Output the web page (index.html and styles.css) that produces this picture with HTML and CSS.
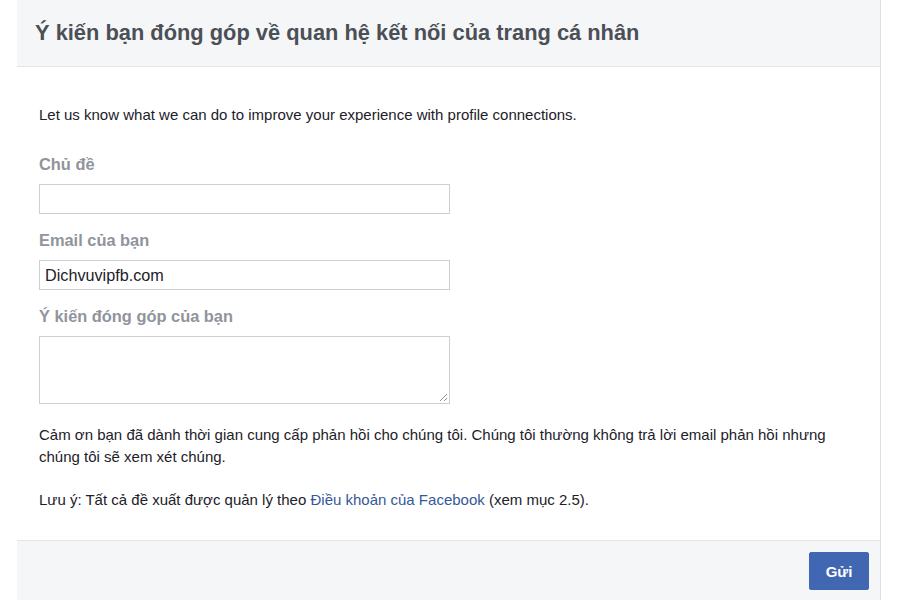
FILE: index.html
```html
<!DOCTYPE html>
<html lang="vi">
<head>
<meta charset="utf-8">
<title>Ý kiến đóng góp</title>
<link rel="stylesheet" href="styles.css">
</head>
<body>
<div class="panel">
  <div class="header">
    <h1 class="title">Ý kiến bạn đóng góp về quan hệ kết nối của trang cá nhân</h1>
  </div>
  <div class="content">
    <p class="intro">Let us know what we can do to improve your experience with profile connections.</p>
    <label class="label label-first">Chủ đề</label>
    <div class="input"></div>
    <label class="label">Email của bạn</label>
    <div class="input">Dichvuvipfb.com</div>
    <label class="label">Ý kiến đóng góp của bạn</label>
    <div class="textarea">
      <svg class="grip" width="10" height="10" viewBox="0 0 10 10"><path d="M9 2 L2 9 M9 6 L6 9" stroke="#8d8f93" stroke-width="1" fill="none"/></svg>
    </div>
    <p class="thanks">Cảm ơn bạn đã dành thời gian cung cấp phản hồi cho chúng tôi. Chúng tôi thường không trả lời email phản hồi nhưng chúng tôi sẽ xem xét chúng.</p>
    <p class="note">Lưu ý: Tất cả đề xuất được quản lý theo <a class="link" href="#">Điều khoản của Facebook</a> (xem mục 2.5).</p>
  </div>
  <div class="footer">
    <button class="btn">Gửi</button>
  </div>
</div>
</body>
</html>
```
FILE: styles.css
```css
html, body {
  margin: 0;
  padding: 0;
  background: #ffffff;
  font-family: "Liberation Sans", Arial, sans-serif;
}
.panel {
  margin-left: 17px;
  width: 863px;
  border-right: 1px solid #dddfe2;
  height: 600px;
  display: flex;
  flex-direction: column;
}
.header {
  background: #f5f6f7;
  border-bottom: 1px solid #e5e5e5;
  display: flex;
  align-items: center;
  padding-left: 18px;
  box-sizing: border-box;
  height: 67px;
}
.title {
  margin: 0;
  font-size: 21.85px;
  font-weight: bold;
  color: #4b4f56;
  line-height: 26px;
}
.content {
  padding: 40px 22px 0 22px;
  height: 474px;
  box-sizing: border-box;
  border-bottom: 1px solid #e5e5e5;
}
.intro {
  margin: 0;
  font-size: 15px;
  line-height: 16px;
  color: #1d2129;
}
.label {
  display: block;
  font-size: 16.4px;
  font-weight: bold;
  line-height: 20px;
  color: #90949c;
  margin-top: 16px;
  margin-bottom: 10px;
}
.label-first {
  margin-top: 31px;
}
.input {
  width: 411px;
  height: 30px;
  box-sizing: border-box;
  border: 1px solid #ccd0d5;
  font-size: 16.2px;
  line-height: 28px;
  padding-left: 5px;
  color: #1d2129;
}
.textarea {
  width: 411px;
  height: 68px;
  box-sizing: border-box;
  border: 1px solid #ccd0d5;
  position: relative;
}
.grip {
  position: absolute;
  right: 1px;
  bottom: 1px;
}
.thanks {
  margin: 20px 0 0 0;
  font-size: 15px;
  line-height: 22px;
  color: #1d2129;
}
.note {
  margin: 21px 0 0 0;
  font-size: 15px;
  line-height: 22px;
  color: #1d2129;
}
.link {
  color: #365899;
  text-decoration: none;
}
.footer {
  flex: 1;
  background: #f5f6f7;
  display: flex;
  justify-content: flex-end;
  align-items: flex-start;
  padding: 11px 11px 0 0;
}
.btn {
  width: 60px;
  height: 38px;
  background: #4267b2;
  border: 1px solid #4267b2;
  border-radius: 2px;
  color: #ffffff;
  font-family: "Liberation Sans", Arial, sans-serif;
  font-size: 15px;
  font-weight: bold;
  padding: 0;
}
```
